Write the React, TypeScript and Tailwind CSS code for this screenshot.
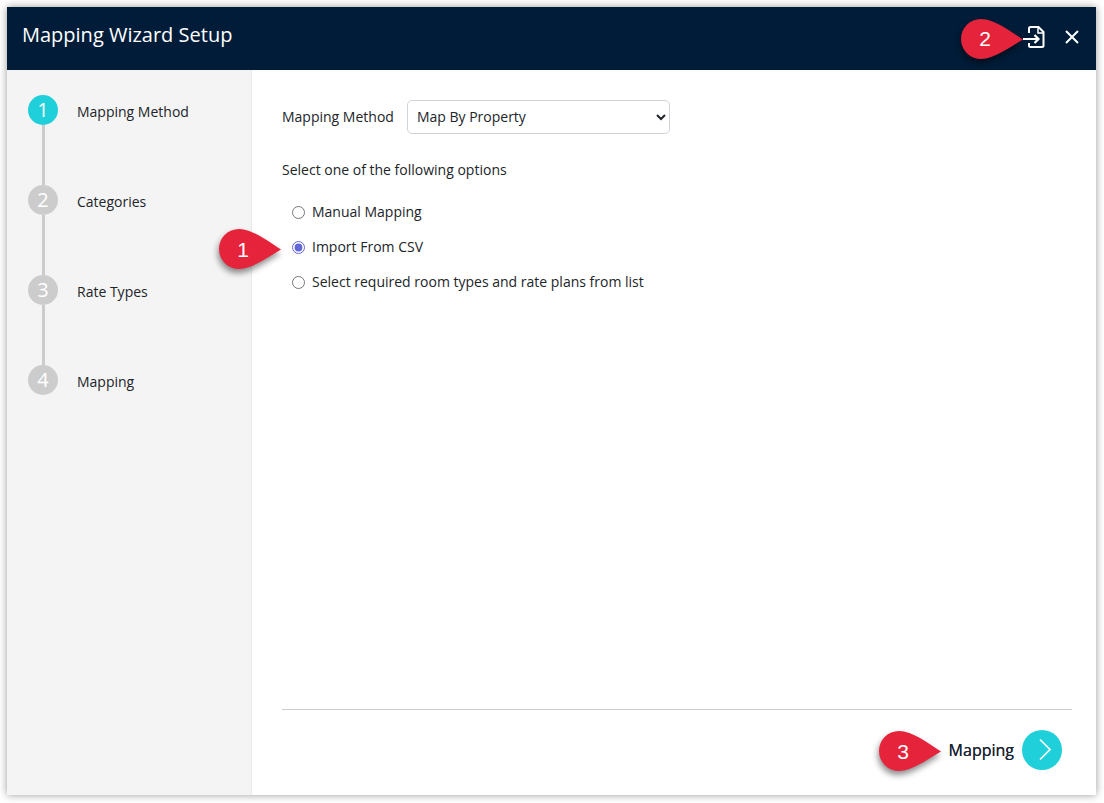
import React from 'react';

const steps = ['Mapping Method', 'Categories', 'Rate Types', 'Mapping'];
const options = ['Manual Mapping', 'Import From CSV', 'Select required room types and rate plans from list'];

// red teardrop note that sits over the screenshot
const Callout = ({ n, className, textClass }: { n: number; className: string; textClass: string }) => (
  <div className={`absolute w-[62px] h-[40px] ${className}`}>
    <svg width="62" height="40" viewBox="0 0 62 40" className="absolute inset-0 overflow-visible drop-shadow-[-1px_4px_3px_rgba(0,0,0,0.45)]">
      <path d="M20 0C33 0 49 12 62 20.5C49 28 33 40 20 40A20 20 0 0 1 20 0Z" fill="#e5233b" />
    </svg>
    <span className={`absolute left-0 w-[48px] h-[40px] flex items-center justify-center text-white text-[21px] font-['Liberation_Sans',sans-serif] ${textClass}`}>{n}</span>
  </div>
);

export default function App() {
  return (
    <div className="relative w-[1104px] h-[803px] bg-white p-[7px] overflow-hidden font-['Open_Sans',sans-serif] text-[14px] text-[#212529]">
      <div className="w-[1089px] h-[788px] flex flex-col bg-white shadow-[0_0_8px_rgba(0,0,0,0.4)]">
        <header className="h-[63px] shrink-0 bg-[#001c38] flex items-center justify-between pl-[15px] pr-[17px] pb-[3px] text-white">
          <h2 className="text-[20px] leading-none -mt-[5px]">Mapping Wizard Setup</h2>
          <div className="flex items-center gap-[18px]">
            <svg width="24" height="24" viewBox="0 0 24 24" fill="none" stroke="white" strokeWidth="2">
              <path d="M6 8V3.5A1.5 1.5 0 0 1 7.5 2H15.5L20.5 7V20.5A1.5 1.5 0 0 1 19 22H7.5A1.500 1.500 0 0 1 6 20.500V18" />
              <path d="M15 2V8H20.5" strokeWidth="1.5" />
              <path d="M0 14H15M11.500 10L15.500 14L11.500 18" strokeWidth="2.200" />
            </svg>
            <svg width="14" height="14" viewBox="0 0 14 14" stroke="white" strokeWidth="2">
              <path d="M1 1L13 13M13 1L1 13" />
            </svg>
          </div>
        </header>
        <div className="flex flex-1 min-h-0">
          <aside className="w-[245px] shrink-0 bg-[#f4f4f4] border-r border-[#e9e9e9] pl-[21px] pt-[25px]">
            {steps.map((s, i) => (
              <div key={s} className="flex gap-[19px]">
                <div className="flex flex-col items-center w-[30px]">
                  <div className={`w-[30px] h-[30px] rounded-full flex items-center justify-center text-white text-[20px] ${i === 0 ? 'bg-[#1fd0da]' : 'bg-[#cccccc]'}`}>{i + 1}</div>
                  {i < steps.length - 1 && <div className="w-[3px] h-[60px] bg-[#cccccc]"></div>}
                </div>
                <div className="pt-[6px] leading-[22px] text-[#212529]">{s}</div>
              </div>
            ))}
          </aside>
          <main className="flex-1 flex flex-col pl-[30px] pr-[24px] pt-[30px]">
            <div className="flex items-center gap-[13px]">
              <label className="-mt-[2px]">Mapping Method</label>
              <select defaultValue="Map By Property" className="w-[263px] h-[34px] pl-[5px] pb-[2px] bg-white border border-[#ced4da] rounded-[5px] text-[14px] text-[#212529]">
                <option>Map By Property</option>
              </select>
            </div>
            <p className="mt-[25px] leading-[22px]">Select one of the following options</p>
            <div className="mt-[14px] flex flex-col pl-[10px]">
              {options.map((o, i) => (
                <label key={o} className="flex items-center gap-[7px] h-[35px]">
                  <input type="radio" name="opt" defaultChecked={i === 1} className="w-[13px] h-[13px] m-0 accent-[#6366d8]" />
                  <span className="-mt-[2px]">{o}</span>
                </label>
              ))}
            </div>
            <div className="mt-auto border-t border-[#cccccc] h-[86px] shrink-0 flex items-center justify-end pr-[10px] pb-[5px]">
              <span className="text-[16px] text-[#1c2333] [text-shadow:0_0_0.6px_#1c2333] mr-[8px] -mt-[1px]">Mapping</span>
              <div className="w-[40px] h-[40px] rounded-full bg-[#1fd0da] flex items-center justify-center">
                <svg width="14" height="24" viewBox="0 0 14 24" fill="none" stroke="white" strokeWidth="1.700" className="ml-[5px]"><path d="M2 1.500L12 11.500L2 21.500" /></svg>
              </div>
            </div>
          </main>
        </div>
      </div>
      <Callout n={1} className="left-[219px] top-[229px]" textClass="top-[1px]" />
      <Callout n={2} className="left-[961px] top-[19px]" textClass="top-0" />
      <Callout n={3} className="left-[879px] top-[731px]" textClass="top-[1px]" />
    </div>
  );
}
